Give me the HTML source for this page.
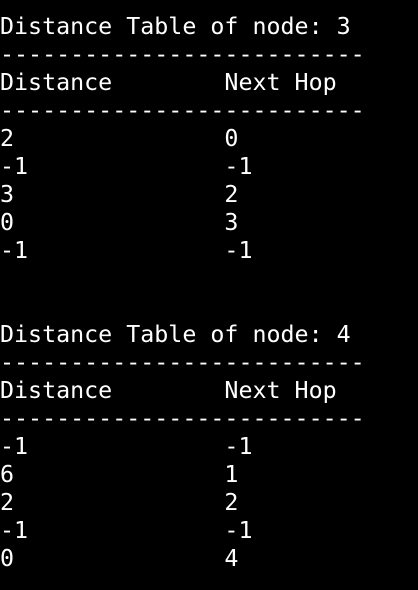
<!DOCTYPE html>
<html><head><meta charset="utf-8"><style>
html,body{margin:0;padding:0;background:#000;width:418px;height:590px;overflow:hidden}
pre{margin:0;padding:13px 0 0 0;color:#fff;font-family:"DejaVu Sans Mono","Liberation Mono",monospace;font-size:23.3px;line-height:28px;white-space:pre}
</style></head><body><pre>Distance Table of node: 3
--------------------------
Distance        Next Hop
--------------------------
2               0
-1              -1
3               2
0               3
-1              -1


Distance Table of node: 4
--------------------------
Distance        Next Hop
--------------------------
-1              -1
6               1
2               2
-1              -1
0               4</pre></body></html>
